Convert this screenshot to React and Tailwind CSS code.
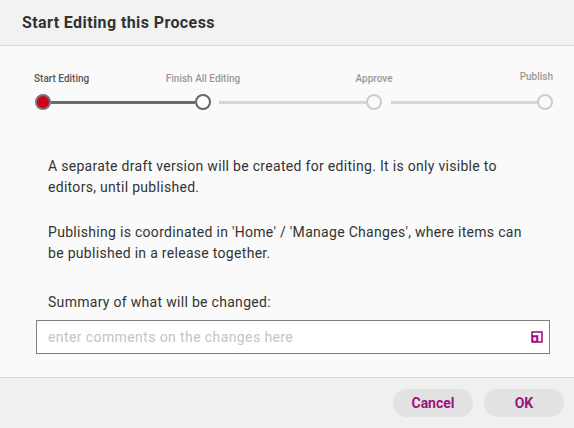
import React from "react";

function Circle({ variant }) {
  const cls =
    variant === "done"
      ? "bg-[#d0021b] border-[2.5px] border-[#757575]"
      : variant === "active"
      ? "bg-white border-[2.5px] border-[#666666]"
      : "bg-[#fafafa] border-2 border-[#cccccc]";
  return <div className={`w-4 h-4 rounded-full shrink-0 box-border ${cls}`} />;
}

export default function App() {
  return (
    <div
      className="w-[574px] h-[428px] flex flex-col bg-[#fafafa] text-[#333333] overflow-hidden"
      style={{ fontFamily: "Roboto, 'Liberation Sans', sans-serif" }}
    >
      <div className="h-[46px] shrink-0 bg-[#f2f2f2] border-b border-[#d6d6d6] px-[22px] flex items-center">
        <span className="text-[16px] font-bold text-[#333333] leading-none tracking-[0.4px]">
          Start Editing this Process
        </span>
      </div>

      <div className="flex-1 flex flex-col">
        <div className="flex items-start pl-[34px] pr-[21px] pt-[27px] text-[10px] leading-[12px] font-medium">
          <div className="w-[109px] text-[#555555]">Start Editing</div>
          <div className="w-[120px] text-center text-[#999999]">Finish All Editing</div>
          <div className="ml-[51px] w-[120px] text-center text-[#999999]">Approve</div>
          <div className="flex-1 text-right text-[#999999] mt-[-2px]">Publish</div>
        </div>

        <div className="flex items-center pl-[35px] mt-[9px]">
          <Circle variant="done" />
          <div className="w-[144px] h-[3px] bg-[#6b6b6b]" />
          <Circle variant="active" />
          <div className="ml-[8px] w-[147px] h-[3px] bg-[#d6d6d6]" />
          <Circle variant="todo" />
          <div className="ml-[9px] w-[146px] h-[3px] bg-[#d6d6d6]" />
          <Circle variant="todo" />
        </div>

        <div className="px-[48px] text-[14px] leading-[21px] text-[#333333] tracking-[0.3px]">
          <p className="mt-[46px]">
            A separate draft version will be created for editing. It is only visible to editors, until published.
          </p>
          <p className="mt-[24px]">
            Publishing is coordinated in 'Home' / 'Manage Changes', where items can be published in a release together.
          </p>
          <p className="mt-[28px]">Summary of what will be changed:</p>
        </div>

        <div className="ml-[36px] w-[514px] h-[34px] mt-[7px] bg-white border border-[#808080] flex items-center pl-[11px] pr-[6px]">
          <span className="flex-1 text-[14px] text-[#c4c4c4] tracking-[0.4px]">enter comments on the changes here</span>
          <svg width="12" height="12" viewBox="0 0 12 12" className="shrink-0">
            <path d="M1 5 V1 H11 V11 H7" fill="none" stroke="#a0067f" strokeWidth="1.5" />
            <rect x="1.25" y="5.25" width="5" height="5.5" fill="none" stroke="#a0067f" strokeWidth="2" />
          </svg>
        </div>
      </div>

      <div className="h-[51px] shrink-0 bg-[#f0f0f0] border-t border-[#d6d6d6] flex items-center justify-end gap-[11px] pr-[10px]">
        <button className="w-[80px] h-[28px] rounded-full bg-[#e2e2e2] text-[14px] font-bold text-[#9c1380]">
          Cancel
        </button>
        <button className="w-[80px] h-[28px] rounded-full bg-[#e2e2e2] text-[14px] font-bold text-[#9c1380]">
          OK
        </button>
      </div>
    </div>
  );
}
